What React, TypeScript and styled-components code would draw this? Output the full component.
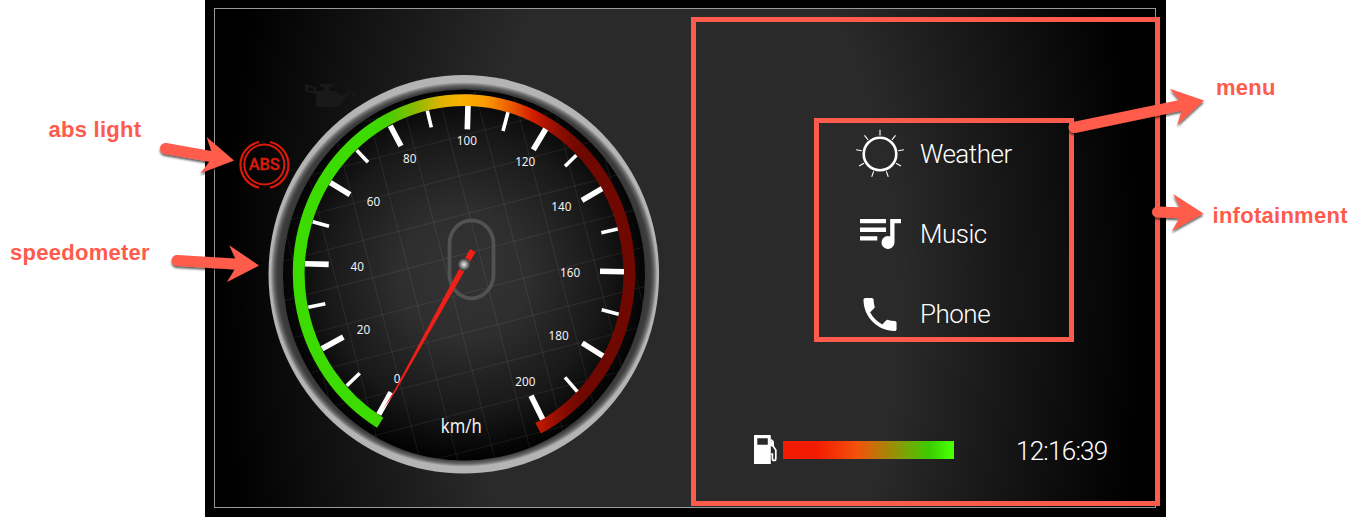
import React from 'react';
import styled, { createGlobalStyle } from 'styled-components';

const Global = createGlobalStyle`
  * { box-sizing: border-box; }
  body { margin: 0; background: #fff; font-family: Roboto, sans-serif; }
`;

const ACCENT = '#ff5b4c';

const Page = styled.main`
  position: relative;
  display: flex;
  width: 1363px;
  height: 521px;
  overflow: hidden;
`;

const NoteColumn = styled.aside<{ $width: number; $top: number; $gap: number }>`
  display: flex;
  flex-direction: column;
  gap: ${p => p.$gap}px;
  width: ${p => p.$width}px;
  flex: none;
  padding-top: ${p => p.$top}px;
`;

const Note = styled.span<{ $indent: number; $width: number }>`
  display: block;
  height: 26px;
  margin-left: ${p => p.$indent}px;
  width: ${p => p.$width}px;
  font: bold 22px/26px 'Liberation Sans', sans-serif;
  letter-spacing: 0.27px;
  color: ${ACCENT};
  white-space: nowrap;
`;

const Dashboard = styled.section`
  flex: none;
  width: 961px;
  height: 517px;
  padding: 8px 10px 9px 9px;
  background: #000;
`;

const Screen = styled.div`
  display: flex;
  width: 942px;
  height: 500px;
  border: 1px solid #999;
  background: radial-gradient(ellipse 462px 830px at 467px 290px, #2a2a2a 47%, #1b1b1b 65%, #000 100%);
`;

const Cluster = styled.div`
  flex: none;
  width: 476px;
  height: 498px;
`;

const Drawing = styled.svg`
  display: block;
`;

const Infotainment = styled.div`
  flex: none;
  display: flex;
  flex-direction: column;
  align-items: flex-start;
  width: 469px;
  height: 489px;
  margin-top: 8px;
  padding: 96px 0 0 118px;
  border: 5px solid ${ACCENT};
`;

const Menu = styled.nav`
  display: flex;
  flex-direction: column;
  width: 260px;
  height: 224px;
  border: 5px solid ${ACCENT};
  margin-bottom: 91px;
`;

const MenuItem = styled.a`
  display: flex;
  align-items: center;
  flex: none;
  height: 80px;
  padding-left: 36px;
  gap: 15px;
  color: #fff;
  font-size: 26px;
  font-weight: 300;
  letter-spacing: -0.5px;
  &:first-child { margin-top: -9px; }
`;

const StatusBar = styled.footer`
  display: flex;
  align-items: center;
  height: 34px;
  margin-left: -60px;
  color: #fff;
`;

const FuelBar = styled.div`
  width: 171px;
  height: 18px;
  margin-left: 5px;
  background: linear-gradient(90deg, #f41c00 0%, #f41c00 20%, #f4510b 43%, #3bce00 86%, #46ff00 98%);
`;

const Clock = styled.time`
  margin: 2px 0 0 62px;
  font-size: 26px;
  font-weight: 300;
  letter-spacing: -0.75px;
`;

const Overlay = styled.svg`
  position: absolute;
  inset: 0;
  pointer-events: none;
`;

type Line = [number, number, number, number];

const majorTicks: Line[] = [
  [391, 392.3, 378.8, 414.3], [343.3, 337, 322, 348.7], [305, 263.7, 328.7, 264.4],
  [330.3, 182.7, 350, 194.7], [390.3, 125.7, 401, 146], [468, 106, 467.3, 129.3],
  [545.7, 129, 533.3, 149.7], [602, 188.7, 582, 200.3], [600, 271.3, 624, 271.8],
  [582.3, 343, 603, 356], [531, 395.7, 542.7, 419.3],
];

const minorTicks: Line[] = [
  [346.7, 385.7, 359.7, 373.3], [308.3, 307.3, 325.3, 303.7], [312.7, 221.7, 329, 226.3],
  [356.7, 150.3, 368, 162.3], [427.3, 110.7, 431.3, 127.3], [508, 112.3, 503, 131],
  [576.3, 155.3, 565, 166.3], [617.7, 229, 601.3, 232.7], [601.7, 309.7, 618.7, 314.3],
  [565, 377.3, 577.3, 391.7],
];

const speeds: [number, number, number][] = [
  [0, 397, 378], [20, 363.5, 329.5], [40, 357.2, 266.5], [60, 373.5, 201.3], [80, 409.7, 158],
  [100, 466.8, 140.5], [120, 525.2, 161.5], [140, 561.4, 206.5], [160, 570.1, 272.7],
  [180, 558.6, 335.5], [200, 525.3, 381.7],
];

const gridRows = [-6, -5, -4, -3, -2, -1, 0, 1, 2, 3, 4, 5];

const Ticks = ({ lines, width }: { lines: Line[]; width: number }) => (
  <g stroke="#fff" strokeWidth={width}>
    {lines.map(([x1, y1, x2, y2]) => (
      <line key={`${x1}-${y1}`} x1={x1} y1={y1} x2={x2} y2={y2} />
    ))}
  </g>
);

const OilLight = () => (
  <g fill="#191919">
    <path d="M316 91h20l6 5 12-8-16 19h-22z" />
    <path d="M320 84h13v3h-4v5h-5v-5h-4z" />
    <path d="M305 84l11 3.500v6.500l-11-2.500zM308 87v3l5 1.300v-3z" fillRule="evenodd" />
    <path d="M353.500 91l1.700 4q-1.700 3-3.400 0z" />
  </g>
);

const AbsLight = () => (
  <g fill="none" stroke="#dc1a0a" strokeWidth="2">
    <circle cx="264.300" cy="164.500" r="20" />
    <path d="M259 142a23.300 23.300 0 0 0 0 45.600M270 142a23.300 23.300 0 0 1 0 45.600" strokeWidth="2.200" />
    <text x="264.300" y="170" fill="#dc1a0a" strokeWidth=".300" fontFamily="Roboto, sans-serif" fontSize="16.500" fontWeight="500" textAnchor="middle" textLength="31">ABS</text>
  </g>
);

const Speedometer = () => (
  <Drawing width="476" height="498" viewBox="215 9 476 498">
    <defs>
      <linearGradient id="scale" gradientUnits="userSpaceOnUse" x1="293" x2="635" y1="0" y2="0">
        <stop offset="0" stopColor="#3cdc00" />
        <stop offset=".23" stopColor="#3cdc00" />
        <stop offset=".27" stopColor="#42d000" />
        <stop offset=".36" stopColor="#8dbb00" />
        <stop offset=".43" stopColor="#dcb400" />
        <stop offset=".49" stopColor="#fab000" />
        <stop offset=".56" stopColor="#fa9c00" />
        <stop offset=".64" stopColor="#ea5800" />
        <stop offset=".7" stopColor="#d41e00" />
        <stop offset=".74" stopColor="#ac1400" />
        <stop offset=".79" stopColor="#880c00" />
        <stop offset=".84" stopColor="#6e0800" />
        <stop offset="1" stopColor="#700800" />
      </linearGradient>
      <radialGradient id="face" gradientUnits="userSpaceOnUse" cx="464" cy="274" r="185">
        <stop offset="0" stopColor="#333" />
        <stop offset=".35" stopColor="#2e2e2e" />
        <stop offset=".75" stopColor="#181818" />
        <stop offset="1" stopColor="#020202" />
      </radialGradient>
      <radialGradient id="rim">
        <stop offset=".94" stopColor="#363636" />
        <stop offset=".968" stopColor="#3e3e3e" />
        <stop offset=".985" stopColor="#666" />
        <stop offset="1" stopColor="#aaa" />
      </radialGradient>
      <radialGradient id="hub">
        <stop offset="0" stopColor="#e8e8e8" />
        <stop offset=".3" stopColor="#b4b4b4" />
        <stop offset=".75" stopColor="#5c5c5c" />
        <stop offset="1" stopColor="#2a2a2a" />
      </radialGradient>
      <clipPath id="faceClip"><ellipse cx="464" cy="275" rx="181" ry="185.500" /></clipPath>
    </defs>
    <OilLight />
    <ellipse cx="463.800" cy="274.300" rx="195.300" ry="199.300" fill="#b4b4b4" />
    <ellipse cx="463.900" cy="274.500" rx="193" ry="192" fill="url(#rim)" />
    <ellipse cx="464" cy="275" rx="181" ry="185.500" fill="url(#face)" />
    <g clipPath="url(#faceClip)">
      <g transform="translate(464 274) rotate(-14.500)" stroke="#fff" strokeOpacity=".075">
        {gridRows.map(i => (
          <React.Fragment key={i}>
            <line x1="-200" x2="200" y1={i * 38.3 + 19} y2={i * 38.3 + 19} />
            <line y1="-200" y2="200" x1={i * 36.4 + 20} x2={i * 36.4 + 20} />
          </React.Fragment>
        ))}
      </g>
    </g>
    <rect x="449.500" y="220.300" width="44" height="78" rx="22" ry="24" fill="none" stroke="#525252" strokeWidth="3.800" />
    <path d="M380.200 422.300A165.300 173.300 0 1 1 538.200 427.800" transform="translate(0 .4)" fill="none" stroke="url(#scale)" strokeWidth="11.800" />
    <Ticks lines={majorTicks} width={5.6} />
    <Ticks lines={minorTicks} width={3.6} />
    <g fill="#f2f2f2" fontFamily="'Noto Sans', sans-serif" fontSize="12.800" textAnchor="middle">
      {speeds.map(([value, x, y]) => (
        <text key={value} x={x} y={y + 4.5} textLength={String(value).length * 6.7} lengthAdjust="spacingAndGlyphs">{value}</text>
      ))}
      <text x="461.300" y="432.500" fontSize="19" textLength="41" lengthAdjust="spacingAndGlyphs">km/h</text>
    </g>
    <path d="M470.200 249l5.400 3.200-8.800 14.800L395 392.500 383 409 394.300 390.500 461.800 264z" fill="#ee2018" />
    <circle cx="464" cy="264.500" r="6.500" fill="url(#hub)" />
    <AbsLight />
  </Drawing>
);

const rays = Array.from({ length: 9 }, (_, i) => i * 40);

const WeatherIcon = () => (
  <Drawing width="50" height="50" viewBox="-25 -25 50 50" stroke="#fff" fill="none">
    <circle r="16.300" strokeWidth="2.600" />
    {rays.map(a => <line key={a} y1="-18.500" y2="-24.200" strokeWidth="1.100" transform={`rotate(${a})`} />)}
  </Drawing>
);

const MusicIcon = () => (
  <Drawing width="50" height="50" viewBox="0 0 50 50" fill="#fff">
    <path d="M5 10h26v4.300H5zM5 18.600h26v4.300H5zM5 27.200h17.300v4.300H5z" />
    <path d="M35.200 10H46v4.300h-6.500v19.200a6.500 6.500 0 1 1-4.300-6.100z" />
  </Drawing>
);

const PhoneIcon = () => (
  <Drawing width="50" height="50" viewBox="0 0 50 50" fill="#fff">
    <path transform="translate(3 3.500) scale(1.835)" d="M6.620 10.790c1.440 2.830 3.760 5.140 6.590 6.590l2.200-2.200c.27-.27.670-.36 1.020-.24 1.120.37 2.330.57 3.570.57.550 0 1 .45 1 1V20c0 .55-.45 1-1 1-9.390 0-17-7.610-17-17 0-.55.450-1 1-1h3.500c.55 0 1 .45 1 1 0 1.250.2 2.450.57 3.570.11.350.03.740-.25 1.020z" />
  </Drawing>
);

const FuelIcon = () => (
  <Drawing width="24" height="30" viewBox="0 0 24 30" fill="#fff">
    <path fillRule="evenodd" d="M.5 0h15.500a.8.800 0 0 1 .8.800V29H0V.5a.5.500 0 0 1 .5-.5zM3.300 3.300v6.400h10.500V3.300z" />
    <path d="M17 4.500l2 2v4.500l2.800 4v8.500q0 2-1.700 2t-1.700-2v-4.500h-1.500" fill="none" stroke="#fff" strokeWidth="1.700" />
    <path d="M16 5l4 3v4l-4-1z" />
  </Drawing>
);

type ArrowProps = { tail: [number, number]; tip: [number, number] };

const Arrow = ({ tail, tip }: ArrowProps) => {
  const dx = tip[0] - tail[0];
  const dy = tip[1] - tail[1];
  const length = Math.hypot(dx, dy);
  const angle = (Math.atan2(dy, dx) * 180) / Math.PI;
  return (
    <g filter="url(#shadow)">
      <path
        transform={`translate(${tip[0]} ${tip[1]}) rotate(${angle})`}
        d={`M0 0L-31 18.500L-24 5.500L${-length} 5.500a5.500 5.500 0 0 1 0-11L-24-5.500L-31-18.500z`}
        fill={ACCENT}
      />
    </g>
  );
};

export default function App() {
  return (
    <Page>
      <Global />
      <NoteColumn $width={205} $top={117} $gap={97}>
        <Note $indent={48.5} $width={100}>abs light</Note>
        <Note $indent={10} $width={150}>speedometer</Note>
      </NoteColumn>
      <Dashboard>
        <Screen>
          <Cluster><Speedometer /></Cluster>
          <Infotainment>
            <Menu>
              <MenuItem><WeatherIcon />Weather</MenuItem>
              <MenuItem><MusicIcon />Music</MenuItem>
              <MenuItem><PhoneIcon />Phone</MenuItem>
            </Menu>
            <StatusBar>
              <FuelIcon />
              <FuelBar />
              <Clock>12:16:39</Clock>
            </StatusBar>
          </Infotainment>
        </Screen>
      </Dashboard>
      <NoteColumn $width={197} $top={75} $gap={102}>
        <Note $indent={50} $width={70}>menu</Note>
        <Note $indent={46.5} $width={140}>infotainment</Note>
      </NoteColumn>
      <Overlay width="1363" height="521">
        <defs>
          <filter id="shadow" x="-20%" y="-50%" width="140%" height="220%">
            <feDropShadow dx="0" dy="2" stdDeviation="1.300" floodColor="#000" floodOpacity=".65" />
          </filter>
        </defs>
        <Arrow tail={[165.5, 148.5]} tip={[234, 160.5]} />
        <Arrow tail={[177, 260.5]} tip={[259, 265.5]} />
        <Arrow tail={[1074, 127.5]} tip={[1204, 100.5]} />
        <Arrow tail={[1157.5, 212]} tip={[1203.5, 213.5]} />
      </Overlay>
    </Page>
  );
}
